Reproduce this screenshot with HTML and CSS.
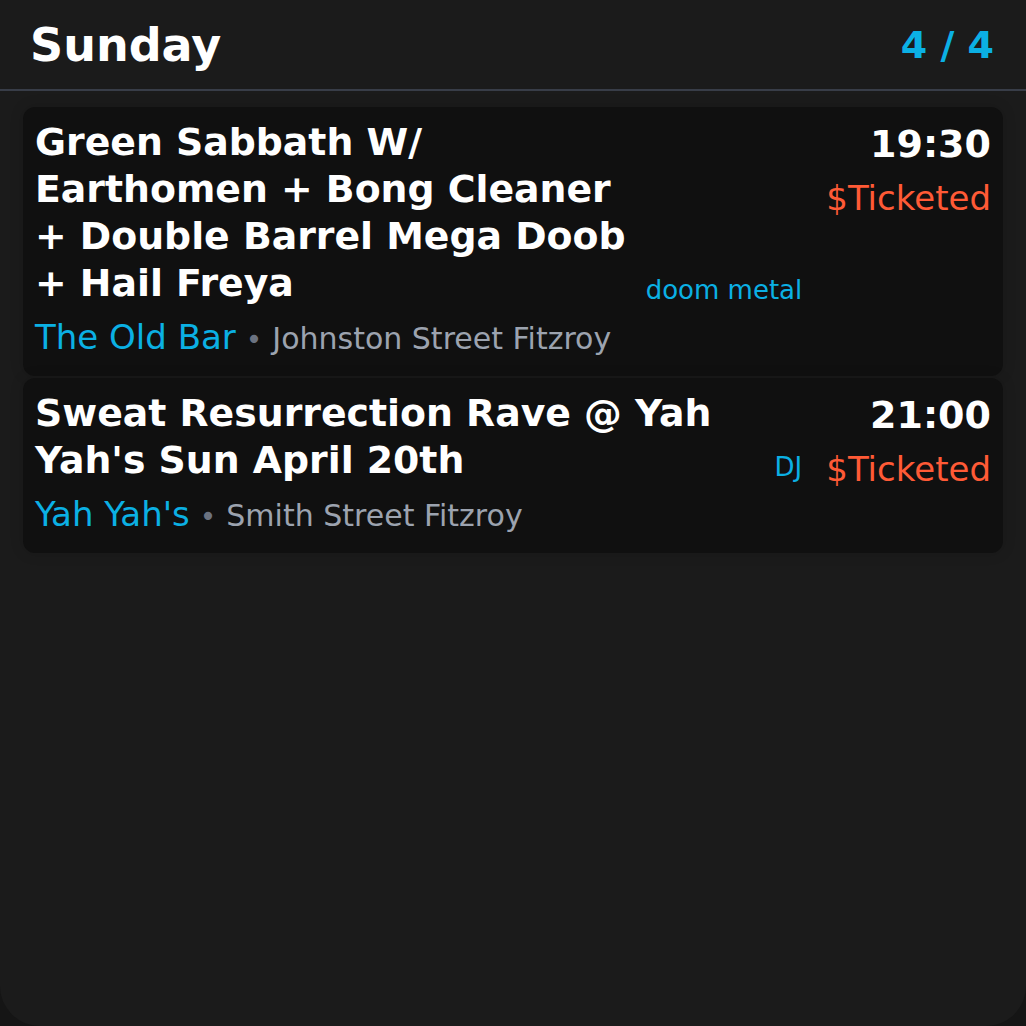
FILE: index.html
```html
<!DOCTYPE html>
<html>
<head>
<meta charset="utf-8">
<link rel="stylesheet" href="styles.css">
</head>
<body>
<div class="app">
  <header class="header">
    <h1 class="day">Sunday</h1>
    <div class="count">4 / 4</div>
  </header>
  <main class="list">
    <article class="card">
      <div class="main">
        <div class="title-row">
          <div class="title">Green Sabbath W/ Earthomen + Bong Cleaner + Double Barrel Mega Doob + Hail Freya</div>
          <div class="tags">doom metal</div>
        </div>
        <div class="venue-line"><span class="venue">The Old Bar</span><span class="dot">•</span><span class="address">Johnston Street Fitzroy</span></div>
      </div>
      <div class="meta">
        <div class="time">19:30</div>
        <div class="price">$Ticketed</div>
      </div>
    </article>
    <article class="card">
      <div class="main">
        <div class="title-row">
          <div class="title">Sweat Resurrection Rave @ Yah Yah's Sun April 20th</div>
          <div class="tags">DJ</div>
        </div>
        <div class="venue-line"><span class="venue">Yah Yah's</span><span class="dot">•</span><span class="address">Smith Street Fitzroy</span></div>
      </div>
      <div class="meta">
        <div class="time">21:00</div>
        <div class="price">$Ticketed</div>
      </div>
    </article>
  </main>
</div>
</body>
</html>
```
FILE: styles.css
```css
html, body {
  margin: 0;
  padding: 0;
  background: #151515;
}
body {
  font-family: "DejaVu Sans", sans-serif;
  color: #ffffff;
}
.app {
  width: 1026px;
  height: 1026px;
  background: #1b1b1b;
  border-radius: 0 0 40px 40px;
  box-sizing: border-box;
  overflow: hidden;
}
.header {
  display: flex;
  align-items: center;
  justify-content: space-between;
  height: 89px;
  padding: 0 32px 0 30px;
  border-bottom: 2px solid #383d48;
}
.day {
  margin: 0;
  font-size: 46px;
  font-weight: bold;
  line-height: 1;
  color: #ffffff;
}
.count {
  font-size: 38px;
  font-weight: bold;
  color: #0bb0e4;
  line-height: 1;
}
.list {
  display: flex;
  flex-direction: column;
  gap: 2px;
  padding: 16px 23px;
}
.card {
  display: flex;
  align-items: flex-start;
  gap: 24px;
  background: #101010;
  border-radius: 12px;
  padding: 12px 12px 19px;
  box-shadow: 0 0 14px rgba(0, 0, 0, 0.15);
}
.main {
  flex: 1;
  min-width: 0;
}
.title-row {
  display: flex;
  gap: 16px;
}
.title {
  flex: 1;
  font-size: 37.8px;
  font-weight: bold;
  line-height: 47px;
}
.tags {
  align-self: flex-end;
  font-size: 26px;
  color: #0bb0e4;
  line-height: 34px;
  white-space: nowrap;
}
.meta {
  display: flex;
  flex-direction: column;
  align-items: flex-end;
}
.time {
  margin-top: 2px;
  font-size: 38px;
  font-weight: bold;
  line-height: 47px;
}
.price {
  margin-top: 10px;
  font-size: 34px;
  color: #ff5a36;
  line-height: 40px;
}
.venue-line {
  margin-top: 10px;
  height: 40px;
  line-height: 40px;
  white-space: nowrap;
}
.venue {
  font-size: 34px;
  color: #0bb0e4;
}
.dot {
  display: inline-block;
  margin: 0 10px;
  font-size: 28px;
  color: #6b7280;
}
.address {
  font-size: 30px;
  color: #9ca3af;
}
```
